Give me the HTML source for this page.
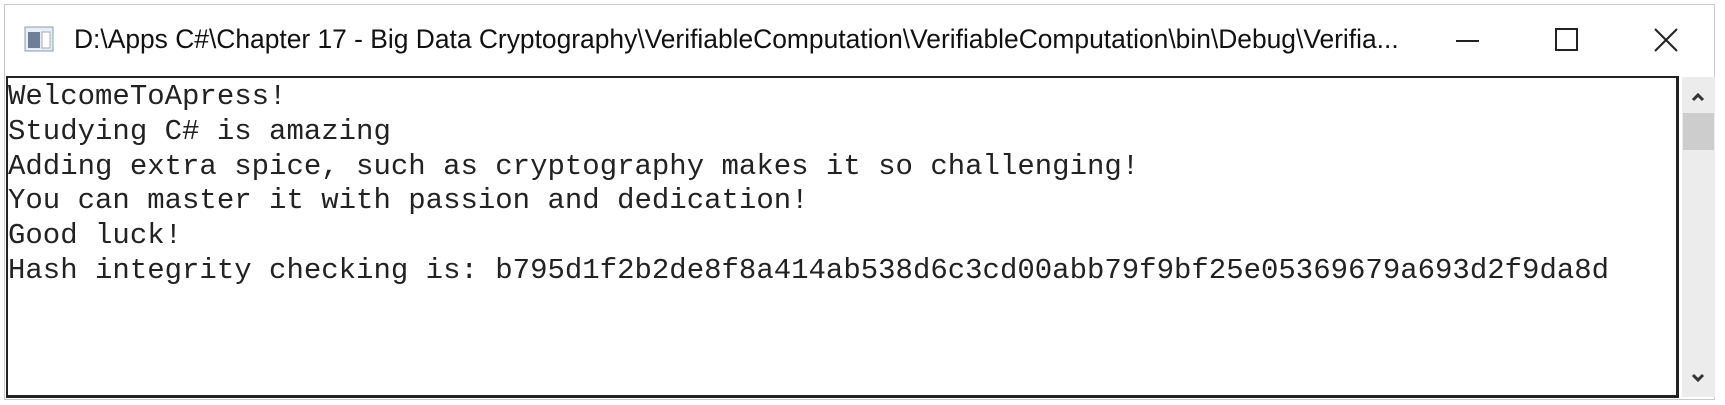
<!DOCTYPE html>
<html><head><meta charset="utf-8"><style>
body{margin:0;width:1725px;height:405px;background:#fff;position:relative;overflow:hidden;font-family:"Liberation Sans",sans-serif}
.outer{position:absolute;left:4px;top:4px;width:1711px;height:396px;border:1px solid #c8c8c8;box-sizing:border-box}
.title{position:absolute;left:74px;top:24px;font-size:26.4px;color:#111;white-space:nowrap}
.con{position:absolute;left:6px;top:76px;width:1673px;height:322px;border:2px solid #222;box-sizing:border-box;border-right-width:3px;border-bottom-width:3px}
pre{margin:0;position:absolute;left:8px;top:80px;font-family:"Liberation Mono",monospace;font-size:29px;line-height:34.8px;color:#222}
.sb{position:absolute;left:1682px;top:77px;width:33px;height:320px;background:#ececec}
.thumb{position:absolute;left:1683px;top:113px;width:31px;height:37px;background:#cdcdcd}
</style></head><body>
<div class="outer"></div>
<svg style="position:absolute;left:24px;top:26px" width="30" height="26"><rect x="1" y="1" width="28" height="24" fill="#e8eef5" stroke="#8a9bb0"/><rect x="4" y="6" width="12" height="16" fill="#6e7f96"/><rect x="18" y="6" width="8" height="16" fill="#fff" stroke="#aab"/></svg>
<div class="title">D:\Apps C#\Chapter 17 - Big Data Cryptography\VerifiableComputation\VerifiableComputation\bin\Debug\Verifia...</div>
<svg style="position:absolute;left:1450px;top:20px" width="250" height="40" stroke="#222" stroke-width="2" fill="none"><line x1="6" y1="21" x2="29" y2="21"/><rect x="106" y="9" width="21" height="21"/><line x1="205" y1="9" x2="227" y2="31"/><line x1="227" y1="9" x2="205" y2="31"/></svg>
<div class="con"></div>
<pre>WelcomeToApress!
Studying C# is amazing
Adding extra spice, such as cryptography makes it so challenging!
You can master it with passion and dedication!
Good luck!
Hash integrity checking is: b795d1f2b2de8f8a414ab538d6c3cd00abb79f9bf25e05369679a693d2f9da8d</pre>
<div class="sb"></div><div class="thumb"></div>
<svg style="position:absolute;left:1682px;top:85px" width="33" height="310" stroke="#333" stroke-width="3" fill="none"><polyline points="11,15 16,10 21,15"/><polyline points="11,290 16,295 21,290"/></svg>
</body></html>
